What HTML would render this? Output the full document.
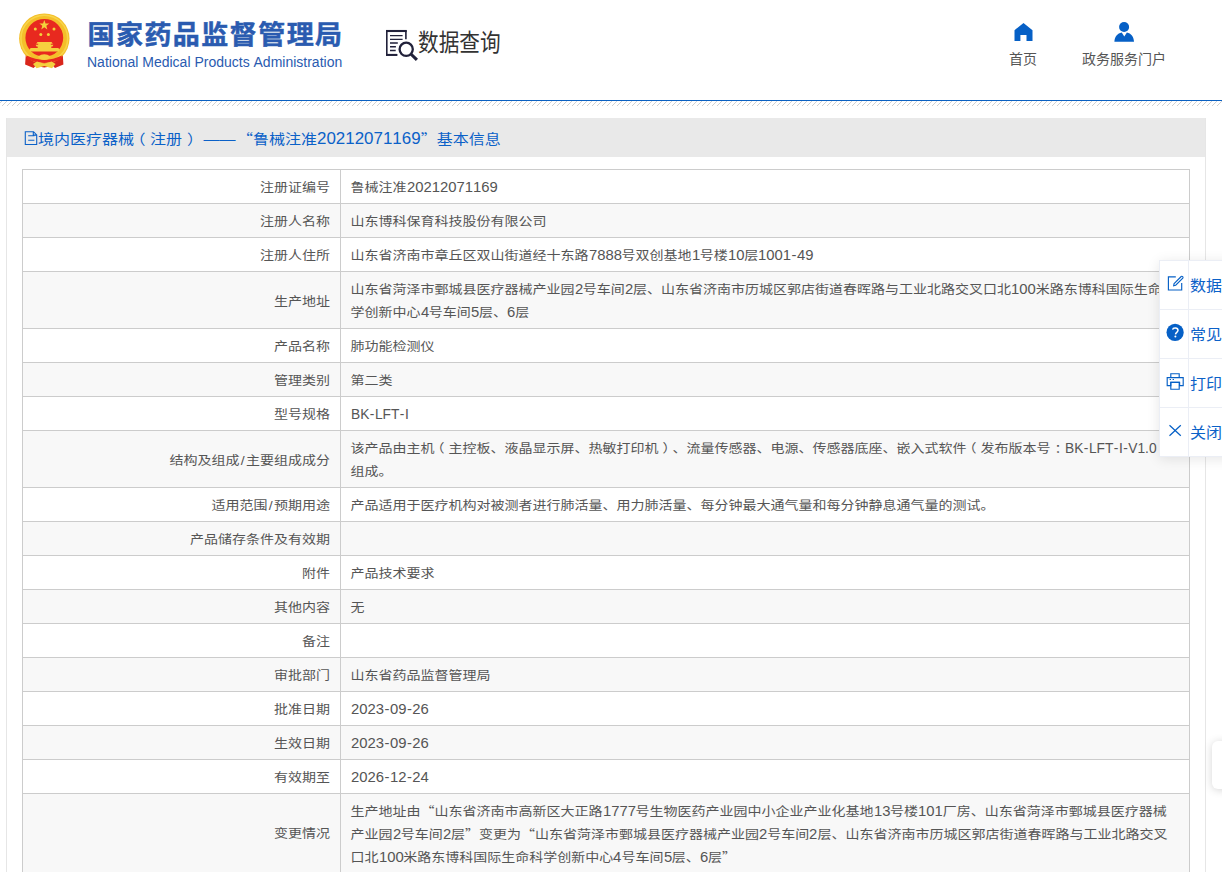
<!DOCTYPE html>
<html lang="zh-CN">
<head>
<meta charset="utf-8">
<title>国家药品监督管理局 数据查询</title>
<style>
*{box-sizing:border-box;margin:0;padding:0}
html,body{width:1222px;height:872px;overflow:hidden;background:#fff}
body{position:relative;font-family:"Liberation Sans","Noto Sans CJK SC",sans-serif;font-size:14px;color:#444;text-spacing-trim:space-all;font-kerning:none}
svg{position:absolute;overflow:visible}
#hdr{position:absolute;left:0;top:0;width:1222px;height:100px;background:#fff}
#title{position:absolute;left:87.5px;top:15px;font-size:27px;line-height:40px;font-weight:bold;color:#2a5bb0;white-space:nowrap;letter-spacing:1.45px;-webkit-text-stroke:0.5px #2a5bb0;transform:scaleY(.955);transform-origin:0 32.5px}
#sub{position:absolute;left:87px;top:52px;font-size:14px;line-height:20px;color:#2a5bb0;white-space:nowrap}
#dq{position:absolute;left:418px;top:27px;font-size:24px;line-height:32px;color:#333;white-space:nowrap;transform-origin:0 50%;transform:scaleX(.86)}
.nav{position:absolute;top:49px;font-size:14px;line-height:20px;color:#555;white-space:nowrap;text-align:center}
#line{position:absolute;left:0;top:100px;width:1222px;height:1px;background:#0a61c2}
#hatch{position:absolute;left:0;top:101px;width:1222px;height:5px}
#card{position:absolute;left:6px;top:118px;width:1200px;height:800px;border:1px solid #e6e6e6;border-top:none;background:#fff}
#chead{position:absolute;left:0;top:0;width:1198px;height:39px;background:#e9e9e9}
#ctitle{position:absolute;left:31px;top:8px;font-size:16px;line-height:24px;color:#0b61c8;white-space:nowrap;transform:scaleY(.88);transform-origin:0 50%}
#ctitle .d{display:inline-block;font-size:19.5px;line-height:20px;transform:scaleX(.868);transform-origin:0 50%;margin-right:-15.74px}
#ctitle .pl{left:-4.5px}
#ctitle .pr{left:5px}
#ctitle .dash{margin-left:5.5px}
#ctitle .q{margin-left:1.5px}
#ctitle .q2{margin-left:0}
table{position:absolute;left:22px;top:169px;width:1168px;border-collapse:collapse;table-layout:fixed}
td{border:1px solid #ccc;padding:0;position:relative;overflow:hidden}
td.l{width:318px}
tr{height:34px}
tr:nth-child(even) td{background:#f8f8f8}
tr.h2{height:57px}
tr.h3{height:80px}
tr.h2 .c{margin-top:1.5px}
tr.h3 .c{margin-top:.5px}
.c{position:absolute;left:9.5px;top:50%;margin-top:1px;font-size:14px;line-height:26.44px;color:#555;white-space:nowrap;transform:translateY(-50%) scaleY(.87);transform-origin:50% 50%}
td.l .c{left:auto;right:10px;text-align:right}
.c .d{display:inline-block;font-size:17.1px;line-height:20px;transform:scaleX(.868);transform-origin:0 50%;vertical-align:baseline}
.c .e{display:inline-block;font-size:17px;line-height:20px;transform:scaleX(.811);transform-origin:0 50%;vertical-align:baseline}
.d{font-size:14.7px;line-height:1}
.hy{margin:0 .55px}
.sl{margin:0 1.3px}
.q{font-family:"Noto Sans CJK SC",sans-serif}
.pl{position:relative;left:-4px}
.pr{position:relative;left:4px}
.co{position:relative;left:4px;top:0}
#panel{position:absolute;left:1159px;top:260px;width:121px;height:197px;background:#fff;border:1px solid #ebeef5;box-shadow:0 2px 12px 0 rgba(0,0,0,.1)}
#panel .r{position:absolute;left:0;width:121px;height:49px;border-bottom:1px solid #ebeef5}
#panel .i{position:absolute;left:0;top:0;width:29px;height:48px;border-right:1px solid #ebeef5}
#panel .t{position:absolute;left:30px;top:13px;font-size:16px;line-height:24px;color:#0b61c8;white-space:nowrap;transform:scaleY(.9);transform-origin:0 50%}
#btop{position:absolute;left:1212px;top:741px;width:40px;height:48px;background:#fff;border-radius:6px;box-shadow:0 1px 9px rgba(0,0,0,.17)}
</style>
</head>
<body>
<div id="hdr">
  <svg id="emblem" style="left:18px;top:12px" width="54" height="58" viewBox="18 12 54 58">
    <path d="M25.9 53 L25.1 64.6 L33.6 67.9 L35.5 66 L44.3 67.6 L53.1 66 L55 67.9 L63.4 64.6 L62.7 53 Z" fill="#d9261c"/>
    <circle cx="44.3" cy="38.6" r="25.2" fill="#f4bf2a"/>
    <circle cx="44.3" cy="38.6" r="23.4" fill="none" stroke="#f8d54a" stroke-width="1.6"/>
    <circle cx="44.3" cy="37.8" r="18.9" fill="#e8291f"/>
    <path d="M26.5 55.5 Q44.3 64 62 55.5 L61 59.5 Q44.3 66.5 27.5 59.5 Z" fill="#e8291f"/>
    <path d="M44.3 20 l1.25 3.5 3.7 .1 -2.95 2.25 1.05 3.55 -3.05 -2.1 -3.05 2.1 1.05 -3.55 -2.95 -2.25 3.7 -.1z" fill="#f3d23c"/>
    <g fill="#f3d23c">
      <circle cx="35.3" cy="29" r="1.5"/><circle cx="54" cy="29" r="1.5"/>
      <circle cx="40.8" cy="34.6" r="1.5"/><circle cx="48.4" cy="34.6" r="1.5"/>
    </g>
    <path d="M37.5 42 h14 l1.3 1.8 h-2 v1 h2.6 l-.9 1.7 h-1.2 v1.6 h6.8 l1.3 1 v2.4 h-29.8 v-2.4 l1.3 -1 h6.8 v-1.6 h-1.2 l-.9 -1.7 h2.6 v-1 h-2z" fill="#f6cf3f"/>
    <path d="M38 56.5 q6.3 -4.5 12.6 0 q-1 3.4 -6.3 3.6 q-5.3 -.2 -6.3 -3.6z" fill="#f6cf3f"/>
    <path d="M33 64 l4 -2.5 l7.3 2.3 l7.3 -2.3 l4 2.5 l-3.6 4.3 l-7.7 -2.2 l-7.7 2.2z" fill="#f4d03e"/>
  </svg>
  <div id="title">国家药品监督管理局</div>
  <div id="sub">National Medical Products Administration</div>
  <svg id="dqi" style="left:384px;top:28px" width="36" height="34" viewBox="384 28 36 34">
    <g fill="none" stroke="#21213a" stroke-linecap="butt">
      <path d="M405.9 39.2 V31 H386.8 V54.9 H397.2" stroke-width="1.6"/>
      <path d="M386 31 H406.7" stroke-width="2.1"/>
      <path d="M386 54.9 H397.3" stroke-width="2"/>
      <path d="M390 35.6 H402.6 M390 39.4 H402.6 M390 43 H397.8 M390 46.7 H395.9 M390 50.5 H395.7" stroke-width="1.4"/>
      <circle cx="406.2" cy="49.3" r="6.6" stroke-width="2.3"/>
      <path d="M410.9 54 L416.9 59.9" stroke-width="3.1"/>
    </g>
  </svg>
  <div id="dq">数据查询</div>
  <svg style="left:1012px;top:20px" width="24" height="24" viewBox="1012 20 24 24">
    <path d="M1023.5 22.9 L1032.5 30.2 V40.9 H1026.5 V35.1 H1020.4 V40.9 H1014.5 V30.2 Z" fill="#0660c6"/>
  </svg>
  <div class="nav" style="left:1009px;width:28px">首页</div>
  <svg style="left:1112px;top:20px" width="24" height="24" viewBox="1112 20 24 24">
    <circle cx="1124.1" cy="27" r="5" fill="#0660c6"/>
    <path d="M1114.4 41.8 C1114.6 36.5 1117.5 33.3 1121.7 32.5 L1124.3 36.6 L1126.9 32.5 C1131 33.3 1133.8 36.5 1134 41.8 Z" fill="#0660c6"/>
  </svg>
  <div class="nav" style="left:1082px;width:84px">政务服务门户</div>
</div>
<div id="line"></div>
<svg id="hatch" width="1222" height="5" viewBox="0 0 1222 5" shape-rendering="crispEdges">
  <defs><pattern id="hp" x="0" y="0" width="5" height="5" patternUnits="userSpaceOnUse">
    <rect x="1" y="0" width="1" height="1" fill="#d2d2d2"/><rect x="0" y="1" width="1" height="1" fill="#d2d2d2"/><rect x="4" y="2" width="1" height="1" fill="#d2d2d2"/><rect x="3" y="3" width="1" height="1" fill="#d2d2d2"/><rect x="2" y="4" width="1" height="1" fill="#d2d2d2"/>
  </pattern></defs>
  <rect x="0" y="0" width="1222" height="5" fill="url(#hp)"/>
</svg>
<div id="card">
  <div id="chead">
    <svg style="left:17px;top:12px" width="14" height="16" viewBox="23 130 14 16">
      <path d="M24.3 131.7 H32.5 L35.7 134.9 V144.5 H24.3 Z M32.3 131.7 V135.1 H35.7 M27.2 135.7 H33.4 M27.2 140.3 H33.4" fill="none" stroke="#0b61c8" stroke-width="1.1"/>
    </svg>
    <div id="ctitle">境内医疗器械<span class="pl">（</span>注册<span class="pr">）</span><span class="dash">——</span><span class="q">“</span>鲁械注准<span class="d">20212071169</span><span class="q q2">”</span>基本信息</div>
  </div>
</div>
<table>
<tr><td class="l"><div class="c">注册证编号</div></td><td><div class="c">鲁械注准<span class="d" style="margin-right:-13.81px">20212071169</span></div></td></tr>
<tr><td class="l"><div class="c">注册人名称</div></td><td><div class="c">山东博科保育科技股份有限公司</div></td></tr>
<tr><td class="l"><div class="c">注册人住所</div></td><td><div class="c">山东省济南市章丘区双山街道经十东路<span class="d" style="margin-right:-5.02px">7888</span>号双创基地<span class="d" style="margin-right:-1.26px">1</span>号楼<span class="d" style="margin-right:-2.51px">10</span>层<span class="d" style="margin-right:-8.43px">1001<span class="hy">-</span>49</span></div></td></tr>
<tr class="h2"><td class="l"><div class="c">生产地址</div></td><td><div class="c" style="top:calc(50% + -11.5px)">山东省菏泽市鄄城县医疗器械产业园<span class="d" style="margin-right:-1.26px">2</span>号车间<span class="d" style="margin-right:-1.26px">2</span>层、山东省济南市历城区郭店街道春晖路与工业北路交叉口北<span class="d" style="margin-right:-3.77px">100</span>米路东博科国际生命科</div><div class="c" style="top:calc(50% + 11.5px)">学创新中心<span class="d" style="margin-right:-1.26px">4</span>号车间<span class="d" style="margin-right:-1.26px">5</span>层、<span class="d" style="margin-right:-1.26px">6</span>层</div></td></tr>
<tr><td class="l"><div class="c">产品名称</div></td><td><div class="c">肺功能检测仪</div></td></tr>
<tr><td class="l"><div class="c">管理类别</div></td><td><div class="c">第二类</div></td></tr>
<tr><td class="l"><div class="c">型号规格</div></td><td><div class="c"><span class="e" style="margin-right:-13.45px">BK<span class="hy">-</span>LFT<span class="hy">-</span>I</span></div></td></tr>
<tr class="h2"><td class="l"><div class="c">结构及组成<span class="sl">/</span>主要组成成分</div></td><td><div class="c" style="top:calc(50% + -11.5px)">该产品由主机<span class="pl">（</span>主控板、液晶显示屏、热敏打印机<span class="pr">）</span>、流量传感器、电源、传感器底座、嵌入式软件<span class="pl">（</span>发布版本号<span class="co">：</span><span class="e" style="margin-right:-21.33px">BK<span class="hy">-</span>LFT<span class="hy">-</span>I<span class="hy">-</span>V1.0</span><span class="pr">）</span></div><div class="c" style="top:calc(50% + 11.5px)">组成。</div></td></tr>
<tr><td class="l"><div class="c">适用范围<span class="sl">/</span>预期用途</div></td><td><div class="c">产品适用于医疗机构对被测者进行肺活量、用力肺活量、每分钟最大通气量和每分钟静息通气量的测试。</div></td></tr>
<tr><td class="l"><div class="c">产品储存条件及有效期</div></td><td><div class="c"></div></td></tr>
<tr><td class="l"><div class="c">附件</div></td><td><div class="c">产品技术要求</div></td></tr>
<tr><td class="l"><div class="c">其他内容</div></td><td><div class="c">无</div></td></tr>
<tr><td class="l"><div class="c">备注</div></td><td><div class="c"></div></td></tr>
<tr><td class="l"><div class="c">审批部门</div></td><td><div class="c">山东省药品监督管理局</div></td></tr>
<tr><td class="l"><div class="c">批准日期</div></td><td><div class="c"><span class="d" style="margin-right:-11.83px">2023<span class="hy">-</span>09<span class="hy">-</span>26</span></div></td></tr>
<tr><td class="l"><div class="c">生效日期</div></td><td><div class="c"><span class="d" style="margin-right:-11.83px">2023<span class="hy">-</span>09<span class="hy">-</span>26</span></div></td></tr>
<tr><td class="l"><div class="c">有效期至</div></td><td><div class="c"><span class="d" style="margin-right:-11.83px">2026<span class="hy">-</span>12<span class="hy">-</span>24</span></div></td></tr>
<tr class="h3"><td class="l"><div class="c">变更情况</div></td><td><div class="c" style="top:calc(50% + -23.0px)">生产地址由<span class="q">“</span>山东省济南市高新区大正路<span class="d" style="margin-right:-5.02px">1777</span>号生物医药产业园中小企业产业化基地<span class="d" style="margin-right:-2.51px">13</span>号楼<span class="d" style="margin-right:-3.77px">101</span>厂房、山东省菏泽市鄄城县医疗器械</div><div class="c" style="top:calc(50% + 0.0px)">产业园<span class="d" style="margin-right:-1.26px">2</span>号车间<span class="d" style="margin-right:-1.26px">2</span>层<span class="q">”</span>变更为<span class="q">“</span>山东省菏泽市鄄城县医疗器械产业园<span class="d" style="margin-right:-1.26px">2</span>号车间<span class="d" style="margin-right:-1.26px">2</span>层、山东省济南市历城区郭店街道春晖路与工业北路交叉</div><div class="c" style="top:calc(50% + 23.0px)">口北<span class="d" style="margin-right:-3.77px">100</span>米路东博科国际生命科学创新中心<span class="d" style="margin-right:-1.26px">4</span>号车间<span class="d" style="margin-right:-1.26px">5</span>层、<span class="d" style="margin-right:-1.26px">6</span>层<span class="q">”</span></div></td></tr>
</table>
<div id="panel">
  <div class="r" style="top:0"><div class="i"></div><div class="t">数据纠错</div></div>
  <div class="r" style="top:49px"><div class="i"></div><div class="t">常见问题</div></div>
  <div class="r" style="top:98px"><div class="i"></div><div class="t">打印</div></div>
  <div class="r" style="top:147px;border-bottom:none"><div class="i"></div><div class="t">关闭</div></div>
</div>
<svg id="picons" style="left:1160px;top:260px" width="30" height="197" viewBox="1160 260 30 197">
  <g fill="none" stroke="#0660c6" stroke-width="1.15">
    <path d="M1175.8 276.9 H1168.4 V290 H1181.7 V283"/>
    <path d="M1174.1 283.6 L1181.2 276.5 A1.15 1.15 0 0 1 1182.8 278.1 L1175.7 285.2 L1173.7 285.7 Z"/>
    <path d="M1167.2 377.6 H1183.2 V385.6 H1179.6 V382.4 H1170.8 V385.6 H1167.2 Z"/>
    <path d="M1170.8 377.4 V373.7 H1179.2 V377.4"/>
    <path d="M1170.8 382.4 H1179.2 V389.2 H1170.8 Z"/>
    <path d="M1169.6 379.5 H1171 M1172.6 379.5 H1174" stroke-width="1"/>
    <path d="M1169.5 425.2 L1180.8 435.8 M1180.8 425.2 L1169.5 435.8" stroke-width="1.2"/>
  </g>
  <circle cx="1175.1" cy="332.4" r="8.6" fill="#0660c6"/>
  <path d="M1172.6 329.6 C1173 327.6 1177.9 327.4 1178 330.3 C1178 332.3 1175.6 332.4 1175.5 334.4" fill="none" stroke="#fff" stroke-width="1.5"/>
  <circle cx="1175.4" cy="336.6" r="1" fill="#fff"/>
</svg>
<div id="btop"></div>
</body>
</html>
